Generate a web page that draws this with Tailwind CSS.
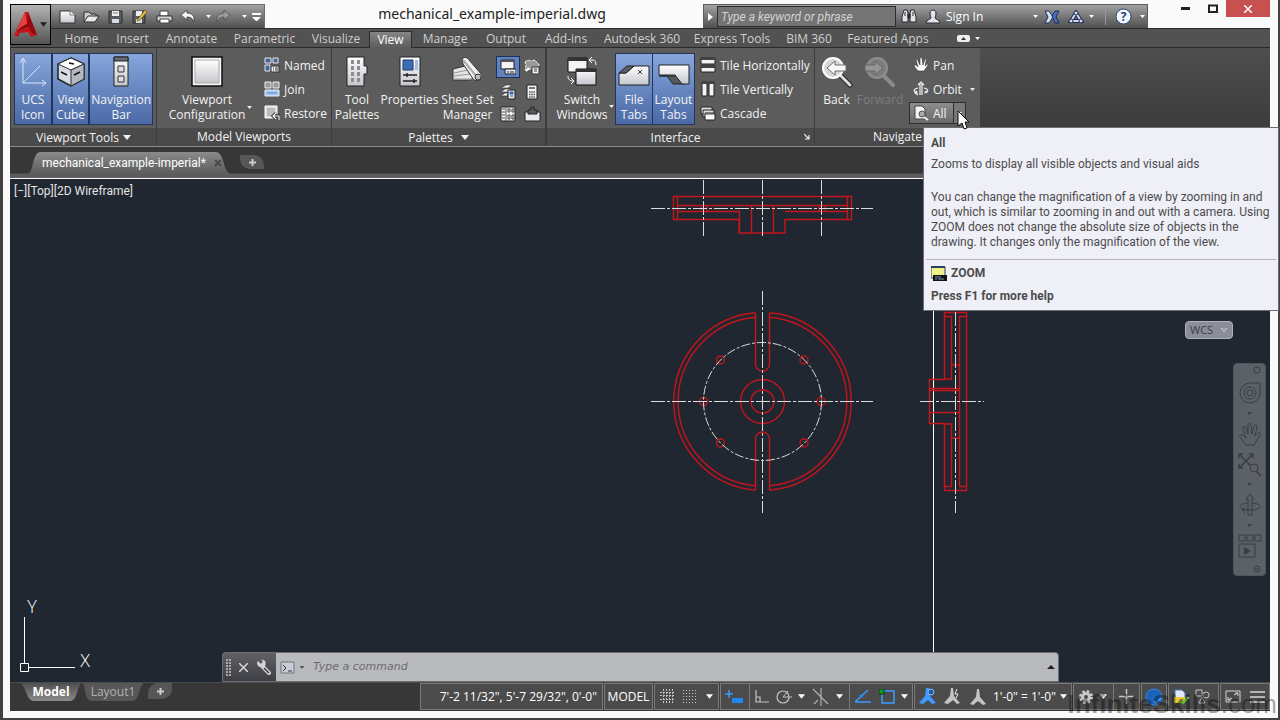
<!DOCTYPE html>
<html lang="en">
<head>
  <meta charset="UTF-8" />
  <meta name="viewport" content="width=device-width, initial-scale=1.0" />
  <title>mechanical_example-imperial.dwg</title>
  <script src="https://cdn.jsdelivr.net/npm/@tailwindcss/browser@4"></script>
</head>
<body class="relative h-screen overflow-hidden bg-[#414141] pl-[3px] pr-[2px] pb-[2px] font-['Open_Sans','Noto_Sans',sans-serif] text-xs text-[#e6e6e6]">

  <!-- Shared icons -->
  <svg class="absolute size-0">
    <defs>
      <symbol id="caret" viewBox="0 0 8 5"><path d="M0 0h8L4 5z" fill="currentColor" /></symbol>
      <linearGradient id="metal" x1="0" y1="0" x2="0" y2="1"><stop offset="0" stop-color="#fff" /><stop offset="1" stop-color="#c4c6cc" /></linearGradient>
      <linearGradient id="tab" x1="0" y1="0" x2="0" y2="1"><stop offset="0" stop-color="#8b8b8b" /><stop offset="1" stop-color="#5c5c5c" /></linearGradient>
      <linearGradient id="tabUp" x1="0" y1="0" x2="0" y2="1"><stop offset="0" stop-color="#4f4f4f" /><stop offset="1" stop-color="#8a8a8a" /></linearGradient>
    </defs>
  </svg>

  <div class="flex h-full flex-col bg-[#fafafa] pl-[7px] pr-2 pb-[7px]">

    <!-- Title bar and ribbon tabs -->
    <header class="grid grid-cols-[41px_1fr] grid-rows-[28px_20px]">
      <div class="row-span-2 mt-1 flex border-b border-[#2a2a2a] bg-[#525252] pb-[2px]">
        <button aria-label="Application menu" class="flex flex-1 items-center justify-center gap-[2px] border border-black bg-linear-to-b from-[#b5b5b5] to-[#555]">
          <svg width="24" height="28" viewBox="0 0 24 28"><path d="M11 1h3l9 23-6 2-3-5-8 1-2 4-4-2z" fill="#c3161c" /><path d="M11 1l2 12-8 6-4 5z" fill="#e8403a" /><path d="M2 22c7-6 13-7 17-6l-3-3c-5 0-9 3-12 6z" fill="#7e0c10" /><path d="M14 1l9 23-5-2-5-9z" fill="#96090e" /></svg>
          <svg class="h-[5px] w-[7px] text-[#222]"><use href="#caret" /></svg>
        </button>
      </div>

      <div class="flex min-w-0">
        <!-- Quick access -->
        <div class="mt-1 flex w-[214px] shrink-0 items-center border-t border-r border-[#6b6b6b] bg-linear-to-b from-[#a2a2a2] to-[#505050] pl-2">
          <button aria-label="New" class="w-6"><svg width="17" height="14" viewBox="0 0 17 14"><path d="M1 1h10l5 4v8H1z" fill="url(#metal)" stroke="#333" /><path d="M11 1v4h5" fill="#fff" stroke="#777" /></svg></button>
          <button aria-label="Open" class="w-[25px]"><svg width="17" height="14" viewBox="0 0 17 14"><path d="M1 12V2h5l2 2h5v3" fill="#c9cbd0" stroke="#2c2c2c" /><path d="M1 12l4-6h11l-4 6z" fill="#e7e8ec" stroke="#2c2c2c" /></svg></button>
          <button aria-label="Save" class="w-6"><svg width="15" height="14" viewBox="0 0 15 14"><path d="M1 1h13v12H1z" fill="#565b66" stroke="#2c2c2c" /><path d="M4 1h7v5H4z" fill="#eceef2" /><path d="M4 9h7v4H4z" fill="#d9dbe0" /><path d="M5 3h5" stroke="#777" /></svg></button>
          <button aria-label="Save as" class="w-6"><svg width="16" height="15" viewBox="0 0 16 15"><path d="M1 2h12v12H1z" fill="#565b66" stroke="#2c2c2c" /><path d="M4 2h6v5H4z" fill="#eceef2" /><path d="M4 10h6v4H4z" fill="#d9dbe0" /><path d="M6 10l7-9 2 2-7 8-3 1z" fill="#f0c24a" stroke="#6b4a10" stroke-width=".7" /></svg></button>
          <button aria-label="Plot" class="w-6"><svg width="17" height="14" viewBox="0 0 17 14"><path d="M4 1h8v5H4z" fill="#fff" stroke="#444" /><path d="M1 6h15v5H1z" fill="#d4d6da" stroke="#333" /><path d="M4 9h9v4H4z" fill="#fff" stroke="#444" /></svg></button>
          <button aria-label="Undo" class="w-5"><svg width="15" height="13" viewBox="0 0 15 13"><path d="M7 0v3c5 0 8 3 7 9-1-3-3-5-7-5v3L1 5z" fill="#f2f3f6" stroke="#3a3a3a" stroke-width=".8" /></svg></button>
          <button aria-label="Undo list" class="flex w-4 justify-center"><svg class="h-[3px] w-[5px] text-white"><use href="#caret" /></svg></button>
          <button aria-label="Redo" class="w-5"><svg width="15" height="13" viewBox="0 0 15 13"><path d="M8 0v3C3 3 0 6 1 12c1-3 3-5 7-5v3l6-5z" fill="#9a9a9a" stroke="#4c4c4c" stroke-width=".8" /></svg></button>
          <button aria-label="Redo list" class="flex w-4 justify-center"><svg class="h-[3px] w-[5px] text-white"><use href="#caret" /></svg></button>
          <button aria-label="Customize"><svg width="9" height="8" viewBox="0 0 9 8"><path d="M0 0h9v2H0zM0 4h9L5 8H4z" fill="#fff" /></svg></button>
        </div>
        <h1 class="flex-1 truncate pl-4 text-center font-['Noto_Sans','Open_Sans',sans-serif] text-[14px] leading-7 text-[#222]">mechanical_example-imperial.dwg</h1>
        <!-- Search and account -->
        <div class="mt-1 flex w-[445px] shrink-0 items-center border border-b-0 border-[#5c5c5c] bg-linear-to-b from-[#a2a2a2] to-[#505050]">
          <button aria-label="Show search" class="w-[13px] pl-1"><svg width="5" height="8" viewBox="0 0 5 8"><path d="M0 0l5 4-5 4z" fill="#fff" /></svg></button>
          <input type="text" aria-label="Search help" placeholder="Type a keyword or phrase" class="h-[21px] w-[179px] border border-[#2d2d2d] bg-[#747474] px-[3px] text-xs italic font-['Roboto',sans-serif] placeholder:text-[#d2d2d2]" />
          <button aria-label="Search" class="ml-[5px]"><svg width="16" height="15" viewBox="0 0 16 15"><path d="M2 4l1-3h3l1 3v9H1V8zM9 4l1-3h3l1 3 1 4v5H9z" fill="#e2e3e7" stroke="#26292f" /><path d="M7 5h2v4H7zM3 4h2M11 4h2M3 6h2M11 6h2" fill="#26292f" stroke="#26292f" /></svg></button>
          <button class="ml-2 flex w-[108px] items-center gap-[5px] text-white"><svg width="16" height="16" viewBox="0 0 16 16"><path d="M5 4c0-4 6-4 6 0 0 3-1 4-1 5s5 2 5 5H1c0-3 5-4 5-5S5 7 5 4z" fill="#dfe3ec" stroke="#2a2a2a" /></svg>Sign In</button>
          <button aria-label="Account list" class="w-[11px]"><svg class="h-[3px] w-[5px] text-white"><use href="#caret" /></svg></button>
          <button aria-label="Exchange" class="w-6"><svg width="16" height="14" viewBox="0 0 16 14"><path d="M1 1h4l4 6-4 6H1l3-6z" fill="#d6e0f4" stroke="#1d2c58" /><path d="M15 1h-4L8 6l3 7h4l-3-6z" fill="#456fc0" stroke="#1d2c58" /></svg></button>
          <button aria-label="Stay connected" class="w-[21px]"><svg width="16" height="14" viewBox="0 0 16 14"><path d="M8 3l5 8H3z" fill="none" stroke="#1f2b4f" stroke-width="4" /><path d="M8 3l5 8H3z" fill="none" stroke="#cfdaf0" stroke-width="2" /><circle cx="8" cy="3" r="2" fill="#dbe4f6" stroke="#1f2b4f" /><circle cx="3" cy="11" r="2" fill="#dbe4f6" stroke="#1f2b4f" /><circle cx="13" cy="11" r="2" fill="#dbe4f6" stroke="#1f2b4f" /></svg></button>
          <button aria-label="Connect list" class="w-4"><svg class="h-[3px] w-[5px] text-white"><use href="#caret" /></svg></button>
          <button aria-label="Help" class="flex h-4 items-center border-l border-[#999] pl-[9px]"><svg width="17" height="17" viewBox="0 0 17 17"><circle cx="8.500" cy="8.500" r="7.500" fill="#f4f7fd" stroke="#27407c" /><text x="8.500" y="13" font-size="12" font-weight="700" text-anchor="middle" fill="#27407c">?</text></svg></button>
          <button aria-label="Help list" class="ml-2"><svg class="h-[3px] w-[5px] text-white"><use href="#caret" /></svg></button>
        </div>
        <div class="flex h-[17px] w-[122px] shrink-0 justify-end">
          <button aria-label="Minimize" class="flex w-[27px] items-center justify-center"><svg width="9" height="3"><path d="M0 0h9v3H0z" fill="#222" /></svg></button>
          <button aria-label="Restore" class="flex w-[27px] items-center justify-center"><svg width="10" height="9"><path d="M1 1.500h8v6.500H1z" fill="none" stroke="#222" stroke-width="2" /></svg></button>
          <button aria-label="Close" class="flex w-[44px] items-center justify-center bg-[#c75050]"><svg width="8" height="8" viewBox="0 0 8 8"><path d="M0 0l8 8M8 0L0 8" stroke="#fff" stroke-width="1.500" /></svg></button>
        </div>
      </div>

      <nav class="flex items-stretch border-t border-b border-[#2a2a2a] bg-[#525252] pl-1 leading-5 text-[#cfcfcf] whitespace-nowrap">
        <button class="w-[53px]">Home</button>
        <button class="w-[49px]">Insert</button>
        <button class="w-[69px]">Annotate</button>
        <button class="w-[77px]">Parametric</button>
        <button class="w-[66px]">Visualize</button>
        <button class="mt-[2px] -mb-px w-[43px] border border-b-0 border-[#2e2e2e] bg-linear-to-b from-[#858585] to-[#5c5c5c] leading-4 text-white">View</button>
        <button class="w-[66px]">Manage</button>
        <button class="w-[56px]">Output</button>
        <button class="w-[64px]">Add-ins</button>
        <button class="w-[88px]">Autodesk 360</button>
        <button class="w-[92px]">Express Tools</button>
        <button class="w-[62px]">BIM 360</button>
        <button class="w-[96px]">Featured Apps</button>
        <button aria-label="Minimize ribbon" class="ml-[21px] flex items-center gap-[5px]"><svg width="13" height="7" viewBox="0 0 13 7"><rect width="13" height="7" rx="2" fill="#eee" /><path d="M4 5h5L6.500 2z" fill="#333" /></svg><svg class="h-[3px] w-[5px] text-white"><use href="#caret" /></svg></button>
      </nav>
    </header>

    <!-- Ribbon -->
    <div class="flex h-[99px] shrink-0 border-b border-[#8a8a8a] bg-linear-to-b from-[#4e4e4e] to-[#383838] leading-[15px] text-[#f2f2f2]">
      <section class="flex w-[147px] flex-col border-x border-[#3c3c3c] bg-[#5c5c5c]">
        <div class="flex h-20 px-[3px] pt-[5px]">
          <button class="flex h-[72px] w-[38px] flex-col items-center gap-1 border border-[#233659] bg-linear-to-b from-[#86a6dc] to-[#4a69a6] pt-[2px]">
            <svg width="28" height="32" viewBox="0 0 28 32"><path d="M4 3v24h23M4 27L21 10M1 7l3-5 3 5M23 24l4 3-4 3" fill="none" stroke="#dbe6f8" /></svg>
            <span>UCS<br />Icon</span>
          </button>
          <button class="flex h-[72px] w-[38px] flex-col items-center gap-1 border border-[#233659] bg-linear-to-b from-[#86a6dc] to-[#4a69a6] pt-[2px]">
            <svg width="30" height="32" viewBox="0 0 30 32"><path d="M15 2l13 6v15l-13 7-13-7V8z" fill="#d9dbe2" stroke="#222" stroke-width="1.500" /><path d="M15 2l13 6-13 6L2 8z" fill="#fff" stroke="#333" /><path d="M15 14l13-6v15l-13 7z" fill="#b4b7c0" stroke="#333" /><path d="M13 7l5 1M5 16l6 3M18 19l6-3" stroke="#111" stroke-width="1.500" /></svg>
            <span>View<br />Cube</span>
          </button>
          <button class="flex h-[72px] w-[64px] flex-col items-center gap-1 border border-[#233659] bg-linear-to-b from-[#86a6dc] to-[#4a69a6] pt-[2px]">
            <svg width="16" height="32" viewBox="0 0 16 32"><path d="M1 1h14v29H1z" fill="url(#metal)" stroke="#222" /><path d="M1 1h14v4H1z" fill="#666b75" stroke="#222" /><path d="M5 10h6v6H5zM5 20h6v6H5z" fill="#dadde2" stroke="#333" /></svg>
            <span>Navigation<br />Bar</span>
          </button>
        </div>
        <button class="flex h-[18px] items-center justify-center gap-1 bg-[#4a4a4a]">Viewport Tools <svg class="h-[5px] w-2"><use href="#caret" /></svg></button>
      </section>

      <section class="flex w-[175px] flex-col border-r border-[#3c3c3c] bg-[#5c5c5c]">
        <div class="flex h-20 pt-[5px] pl-2">
          <button class="relative flex w-[84px] flex-col items-center gap-1 pt-[3px]">
            <svg width="32" height="32" viewBox="0 0 32 32"><path d="M1 1h30v29H1z" fill="#f4f5f7" stroke="#111" stroke-width="1.500" /><path d="M4 4h24v23H4z" fill="url(#metal)" stroke="#aaa" /></svg>
            <span>Viewport<br />Configuration</span>
            <svg class="absolute -right-[3px] top-[53px] h-[3px] w-[5px]"><use href="#caret" /></svg>
          </button>
          <div class="ml-[15px] flex flex-col">
            <button class="flex h-6 items-center gap-1"><svg width="16" height="16" viewBox="0 0 16 16"><path d="M1 1h6v5H1zM9 1h5v5H9zM1 8h5v6H1z" fill="#46659c" stroke="#e8e8e8" /><path d="M7 9h8v6H7z" fill="#eee" stroke="#333" /><path d="M9 11h1m1 0h3M9 13h1m1 0h3" stroke="#333" /></svg>Named</button>
            <button class="flex h-6 items-center gap-1"><svg width="16" height="16" viewBox="0 0 16 16"><path d="M1 1h6v6H1zM9 1h6v6H9z" fill="#999" stroke="#eee" /><path d="M1 9h14v6H1z" fill="#a8c7f0" stroke="#e8f0fa" /><path d="M3 12h10" stroke="#5a86c4" /></svg>Join</button>
            <button class="flex h-6 items-center gap-1"><svg width="16" height="16" viewBox="0 0 16 16"><path d="M1 1h12v12H1z" fill="#ddd" stroke="#fff" /><path d="M3 3h8v8H3z" fill="#bbb" /><path d="M15 15v-4H9m3-3l-3 3 3 3" fill="none" stroke="#222" stroke-width="3" /><path d="M15 15v-4H9m3-3l-3 3 3 3" fill="none" stroke="#fff" stroke-width="1.200" /></svg>Restore</button>
          </div>
        </div>
        <h2 class="h-[18px] bg-[#4a4a4a] text-center leading-[18px]">Model Viewports</h2>
      </section>

      <section class="flex w-[214px] flex-col border-r border-[#3c3c3c] bg-[#5c5c5c]">
        <div class="flex h-20 pt-[5px] pl-[2px]">
          <button class="flex w-[46px] flex-col items-center gap-1 pt-[3px]">
            <svg width="22" height="32" viewBox="0 0 22 32"><path d="M1 1h17v9h3v8h-3v12H1z" fill="url(#metal)" stroke="#222" /><path d="M5 4h3v4H5zM11 4h3v4h-3zM5 10h3v4H5zM11 10h3v4h-3zM5 16h3v4H5zM11 16h3v4h-3zM5 22h3v4H5zM11 22h3v4h-3z" fill="#8b8d93" /></svg>
            <span>Tool<br />Palettes</span>
          </button>
          <button class="flex w-[59px] flex-col items-center gap-1 pt-[3px]">
            <svg width="22" height="32" viewBox="0 0 22 32"><path d="M1 1h20v29H1z" fill="url(#metal)" stroke="#222" /><path d="M4 4h10v10H4z" fill="#3a6db3" stroke="#1f3d6b" /><path d="M16 4h3v10h-3z" fill="#a5bfe2" /><path d="M4 19h14M8 17v4M4 25h14M15 23v4" stroke="#222" stroke-width="1.500" /></svg>
            <span>Properties</span>
          </button>
          <button class="flex w-[57px] flex-col items-center gap-1 pt-[3px] whitespace-nowrap">
            <svg width="32" height="32" viewBox="0 0 32 32"><path d="M1 13l12-3 9 12-4 2H1z" fill="#e4e6ea" stroke="#333" /><path d="M2 17l14-3M2 20l16-2M1 23h20" stroke="#999" /><path d="M10 3c3-3 6-1 7 1l13 15c1 4-4 7-8 5L11 8z" fill="#f1f2f4" stroke="#333" /><path d="M11 4l14 17" stroke="#aaa" stroke-width="2" /><circle cx="26" cy="21" r="3" fill="#bbb" stroke="#333" /></svg>
            <span>Sheet Set<br />Manager</span>
          </button>
          <div class="grid h-[72px] grid-cols-[24px_24px] place-items-center">
            <button aria-label="Command line" class="flex h-[22px] w-6 items-center justify-center border border-[#1d3257] bg-[#5f83c2]"><svg width="16" height="16" viewBox="0 0 16 16"><path d="M1 1h13v9H1z" fill="#f4f4f4" stroke="#222" /><path d="M1 1h13v2H1z" fill="#555" /><path d="M5 10h11v5H5z" fill="#dfe2e8" stroke="#222" /><path d="M7 13h2m1 0h4" stroke="#333" /></svg></button>
            <button aria-label="Markup set manager"><svg width="16" height="16" viewBox="0 0 16 16"><path d="M1 3l3-2 3 1 4-1 2 3 2 1-1 4-13 2 1-4z" fill="#999" stroke="#eee" stroke-dasharray="3 1" /><path d="M2 12l3-3" stroke="#fff" stroke-width="2" /><path d="M8 8h7v7H8z" fill="#eee" stroke="#333" /><path d="M10 10h3M10 12h3" stroke="#444" /></svg></button>
            <button aria-label="Layer properties"><svg width="16" height="16" viewBox="0 0 16 16"><path d="M1 4l5-3h6l-4 3zM1 8l4-3h6L8 8zM1 12l4-3h4l-2 3z" fill="#f2f2f2" stroke="#333" stroke-width=".6" /><path d="M8 6h7v9H8z" fill="#dfe2e8" stroke="#222" /><path d="M10 8h3v2h-3zM10 12h3" fill="#3a6db3" stroke="#3a6db3" /></svg></button>
            <button aria-label="Calculator"><svg width="12" height="16" viewBox="0 0 12 16"><path d="M1 1h10v14H1z" fill="#f2f2f2" stroke="#222" /><path d="M3 3h6v2H3z" fill="#777" /><path d="M3 8h6M3 10.500h6M3 13h6" stroke="#555" stroke-width="1.500" stroke-dasharray="1.500 .7" /></svg></button>
            <button aria-label="Design center"><svg width="16" height="16" viewBox="0 0 16 16"><path d="M1 1h14v14H1z" fill="#f2f2f2" stroke="#222" /><path d="M2 3h3M2 6h3M2 9h3M2 12h3M6 1v14" stroke="#555" /><path d="M8 3h2v3H8zM12 3h2v3h-2zM8 9h2v4H8zM12 9h2v4h-2z" fill="none" stroke="#444" /></svg></button>
            <button aria-label="Clipboard"><svg width="17" height="16" viewBox="0 0 17 16"><path d="M1 6h15v9H1z" fill="#e8eaee" stroke="#222" /><path d="M7 1h3v3h3v4H4V4h3z" fill="#555962" stroke="#222" /></svg></button>
          </div>
        </div>
        <button class="flex h-[18px] items-center justify-center gap-2 bg-[#4a4a4a]">Palettes <svg class="h-[5px] w-2"><use href="#caret" /></svg></button>
      </section>

      <section class="flex w-[269px] flex-col border-x border-[#3c3c3c] bg-[#5c5c5c]">
        <div class="flex h-20 pt-[5px] pl-[10px]">
          <button class="relative flex w-[50px] flex-col items-center gap-1 pt-[3px]">
            <svg width="32" height="32" viewBox="0 0 32 32"><path d="M2 2h19v14H2z" fill="#f4f4f4" stroke="#111" /><path d="M2 2h19v3H2z" fill="#333" /><path d="M10 13h20v16H10z" fill="url(#metal)" stroke="#111" /><path d="M10 13h20v3H10z" fill="#333" /><path d="M23 4h4c2 0 3 2 3 5M26 1l-3 3 3 3M2 20c0 4 2 5 6 5M5 22l3 3-3 3" fill="none" stroke="#fff" /></svg>
            <span>Switch<br />Windows</span>
            <svg class="absolute -right-[7px] top-[52px] h-[3px] w-[5px]"><use href="#caret" /></svg>
          </button>
          <button class="ml-2 flex h-[72px] w-[38px] flex-col items-center gap-1 border border-[#233659] bg-linear-to-b from-[#86a6dc] to-[#4a69a6] pt-[2px]">
            <svg width="32" height="32" viewBox="0 0 32 32"><path d="M1 17h7l8-7h15v19H1z" fill="url(#metal)" stroke="#222" /><path d="M1 17l8-7h7l-8 7z" fill="#5b5e66" stroke="#222" /><path d="M20 14l4 4m0-4l-4 4" stroke="#333" /></svg>
            <span>File<br />Tabs</span>
          </button>
          <button class="flex h-[72px] w-[42px] flex-col items-center gap-1 border border-l-0 border-[#233659] bg-linear-to-b from-[#86a6dc] to-[#4a69a6] pt-[2px]">
            <svg width="32" height="32" viewBox="0 0 32 32"><path d="M1 20h8l6 8h12l4-8z" fill="#555962" stroke="#222" /><path d="M1 9h30v19h-7l-7-9H1z" fill="url(#metal)" stroke="#222" /></svg>
            <span>Layout<br />Tabs</span>
          </button>
          <div class="ml-[5px] flex flex-col whitespace-nowrap">
            <button class="flex h-6 items-center gap-1"><svg width="16" height="16" viewBox="0 0 16 16"><path d="M1 1h14v6H1zM1 9h14v6H1z" fill="#f2f2f2" stroke="#222" /><path d="M1 1h14v2H1zM1 9h14v2H1z" fill="#444" /></svg>Tile Horizontally</button>
            <button class="flex h-6 items-center gap-1"><svg width="16" height="16" viewBox="0 0 16 16"><path d="M2 1h5v14H2zM9 1h5v14H9z" fill="#f2f2f2" stroke="#222" /><path d="M2 1h5v2H2zM9 1h5v2H9z" fill="#444" /></svg>Tile Vertically</button>
            <button class="flex h-6 items-center gap-1"><svg width="16" height="16" viewBox="0 0 16 16"><path d="M1 2h11v7H1z" fill="#ddd" stroke="#222" /><path d="M3 5h11v7H3z" fill="#ddd" stroke="#222" /><path d="M5 8h10v7H5z" fill="#f6f6f6" stroke="#222" /><path d="M5 9h10" stroke="#444" /></svg>Cascade</button>
          </div>
        </div>
        <div class="flex h-[18px] items-center justify-between bg-[#4a4a4a] pr-1">
          <h2 class="flex-1 text-center">Interface</h2>
          <button aria-label="Interface options"><svg width="6" height="6" viewBox="0 0 6 6"><path d="M0 0l5 5M5 1v4H1" fill="none" stroke="#eee" stroke-width="1.200" /></svg></button>
        </div>
      </section>

      <section class="flex w-[165px] flex-col bg-[#5c5c5c]">
        <div class="flex h-20 pt-[5px]">
          <button class="flex w-[43px] flex-col items-center gap-1 pt-[3px]">
            <svg width="32" height="32" viewBox="0 0 32 32"><path d="M20 20l9 9" stroke="#222" stroke-width="5" stroke-linecap="round" /><path d="M20 20l9 9" stroke="#ddd" stroke-width="3" stroke-linecap="round" /><circle cx="12" cy="12" r="10" fill="#d4d6da" stroke="#fff" stroke-width="2" /><path d="M6 12l8-7v4h11v6H14v4z" fill="#f7f7f7" stroke="#6a6d74" /></svg>
            <span>Back</span>
          </button>
          <button class="flex w-[44px] flex-col items-center gap-1 pt-[3px] text-[#7d7d7d]">
            <svg width="32" height="32" viewBox="0 0 32 32"><path d="M20 20l9 9" stroke="#8a8a8a" stroke-width="4" stroke-linecap="round" /><circle cx="13" cy="12" r="10" fill="#7c7c7c" stroke="#8d8d8d" stroke-width="2" /><path d="M19 12l-8-7v4H1v6h10v4z" fill="#959595" stroke="#666" /></svg>
            <span>Forward</span>
          </button>
          <div class="ml-[7px] flex flex-col items-start">
            <button class="flex h-6 items-center gap-1 pl-1"><svg width="16" height="16" viewBox="0 0 16 16"><path d="M5 14L1 9c0-1 1-1 2-1l2 2L3 3c1-1 2 0 2 1l2 4V1c1-1 2 0 2 0l1 7 2-6c1 0 2 0 1 2l-1 5 2-2c1 0 1 1 1 1l-4 6z" fill="#fff" stroke="#333" stroke-width=".6" /></svg>Pan</button>
            <button class="flex h-6 items-center gap-1 pl-1"><svg width="16" height="16" viewBox="0 0 16 16"><path d="M7 2v12M9 2v12M5 4l3-3 3 3M5 7C0 8 0 11 5 12M11 7c5 1 5 4 0 5M4 10l-2 2 3 2M12 10l2 2" fill="none" stroke="#f4f4f4" stroke-width="1.200" /></svg>Orbit<svg class="ml-1 h-[3px] w-[5px]"><use href="#caret" /></svg></button>
            <div class="mt-px flex h-[22px] border border-[#2f2f2f]">
              <button class="flex w-[43px] items-center gap-1 bg-linear-to-b from-[#8d8d8d] to-[#6a6a6a] pl-[3px]"><svg width="16" height="16" viewBox="0 0 16 16"><path d="M2 1h7l3 3v10H2z" fill="#f4f4f4" stroke="#444" /><path d="M11 12l4 3" stroke="#eee" stroke-width="2" /><circle cx="9" cy="9" r="3" fill="#aaa" stroke="#555" /></svg>All</button>
              <button aria-label="Zoom list" class="flex w-3 items-center justify-center border-l border-[#2f2f2f] bg-[#777]"><svg class="h-[3px] w-[5px]"><use href="#caret" /></svg></button>
            </div>
          </div>
        </div>
        <h2 class="h-[18px] bg-[#4a4a4a] text-center leading-[18px]">Navigate</h2>
      </section>
    </div>

    <!-- Drawing tabs -->
    <div class="flex h-8 shrink-0 items-start border-b border-white bg-linear-to-b from-[#373737] from-85% to-[#5c5c5c] to-86% pl-[18px]">
      <div class="relative isolate mt-1 flex h-[23px] w-[210px] items-center pl-[14px] font-['Roboto',sans-serif] whitespace-nowrap text-white">
        <svg class="absolute inset-0 -z-10 size-full" viewBox="0 0 212 23" preserveAspectRatio="none"><path d="M0 23C6 21 4 1 13 1h176c10 0 7 20 16 22z" fill="url(#tab)" /></svg>
        <button>mechanical_example-imperial*</button>
        <button aria-label="Close drawing" class="ml-auto mr-4"><svg width="8" height="8" viewBox="0 0 8 8"><path d="M1 1l6 6M7 1L1 7" stroke="#4a4a4a" stroke-width="2" /></svg></button>
      </div>
      <button aria-label="New drawing" class="mt-2 ml-[2px] flex h-[14px] w-6 items-center justify-center rounded-tr-[10px] rounded-bl-[10px] bg-[#575757]"><svg width="7" height="7" viewBox="0 0 7 7"><path d="M3.500 0v7M0 3.500h7" stroke="#ccc" stroke-width="2" /></svg></button>
    </div>

    <!-- Canvas -->
    <main class="relative min-h-0 flex-1 overflow-hidden bg-[#212730]">
      <svg class="absolute inset-0 size-full">
        <g transform="translate(-10 -179)" fill="none">
          <path d="M933.500 179v504" stroke="#fff" />
          <g stroke="#c4141c" stroke-width="1.400">
            <!-- top view -->
            <path d="M673.500 196.500h178v23H785v13.500h-46v-13.500h-65.500zM677.500 197v22M847.500 197v22M678 205.500h169M678 211.500h61.500v22M847 211.500H785M751.500 205v28M773.500 205v28M701 205v6M707 205v6M819 205v6M825 205v6" />
            <!-- front view -->
            <path d="M755.500 312.800A89 89 0 0 0 755.500 490.200M769.500 312.800A89 89 0 0 1 769.500 490.200M755.500 317.300A84.500 84.500 0 0 0 755.500 485.700M769.500 317.300A84.500 84.500 0 0 1 769.500 485.700" />
            <path d="M755.500 313v51a7 7 0 0 0 14 0v-51M755.500 490v-51a7 7 0 0 1 14 0v51" />
            <circle cx="762.500" cy="401.500" r="22" />
            <circle cx="762.500" cy="401.500" r="11.500" />
            <circle cx="821" cy="401.500" r="4" />
            <circle cx="703.500" cy="401.500" r="4" />
            <circle cx="720.500" cy="360" r="4" />
            <circle cx="804" cy="360" r="4" />
            <circle cx="720.500" cy="443" r="4" />
            <circle cx="804" cy="443" r="4" />
            <!-- side view -->
            <path d="M944.500 312.500h22v178h-22V423.500h-15v-44h15zM944.500 316.500h7M959 316.500h8M944.500 486.500h7M959 486.500h8M951.500 316v63h-7M951.500 487v-63h-7M959.500 316v171M929.500 388.500h30M929.500 390.500h30M929.500 412.500h30M951.500 365h8M951.500 438h8" />
          </g>
          <g stroke="#dcdcdc" stroke-dasharray="14 2 3 2">
            <path d="M651 208.500h222M703.500 180v56M762.500 180v56M821.500 180v56M651 401.500h222M762.500 291v222M920 401.500h64M955.500 312v201" />
            <circle cx="762.500" cy="401.500" r="59" stroke-dasharray="9 2 3 2" />
          </g>
          <!-- UCS -->
          <path d="M24.500 617v46M29 667.500h46M20.500 663.500h8v8h-8z" stroke="#fff" />
          <g fill="#fff" font-size="18" font-weight="300" text-anchor="middle"><text x="32" y="613">Y</text><text x="85" y="667">X</text></g>
        </g>
      </svg>
      <p class="absolute top-1 left-1 font-['Roboto',sans-serif] leading-4 text-[#e4e4e4]">[−][Top][2D Wireframe]</p>

      <button class="absolute top-[142px] right-[37px] flex h-[18px] w-12 items-center justify-between rounded border border-[#b0b3ba] bg-[#8b8e98] px-1 text-[11px] text-[#3b3e47]">WCS <svg width="8" height="5" viewBox="0 0 8 5"><path d="M1 0h6L4 4z" fill="none" stroke="#c5c8d0" /></svg></button>

      <div class="absolute top-[184px] right-1 flex h-[213px] w-[33px] flex-col items-center justify-between rounded border border-[#50545c] bg-[#5c6067] py-[2px] text-[#393d44]">
        <button aria-label="Close bar" class="mr-1 self-end"><svg width="8" height="8" viewBox="0 0 8 8"><circle cx="4" cy="4" r="3" fill="none" stroke="currentColor" /></svg></button>
        <button aria-label="Steering wheel"><svg width="24" height="24" viewBox="0 0 24 24"><path d="M22 2v11a10 10 0 1 1-10-11z" fill="none" stroke="currentColor" /><circle cx="12" cy="12" r="6" fill="none" stroke="currentColor" /><circle cx="12" cy="12" r="3" fill="none" stroke="currentColor" /></svg></button>
        <svg class="h-[3px] w-[5px]"><use href="#caret" /></svg>
        <button aria-label="Pan view"><svg width="24" height="24" viewBox="0 0 24 24"><path d="M8 23L2 15c-1-2 1-3 3-2l3 3L5 6c0-2 2-2 3-1l2 7V3c0-2 3-2 3 0l1 9 2-8c1-2 3-1 3 1l-2 9 3-3c2-1 3 0 2 2l-6 10z" fill="none" stroke="currentColor" /></svg></button>
        <button aria-label="Zoom extents"><svg width="24" height="24" viewBox="0 0 24 24"><path d="M1 1l14 14M15 1L1 15M1 5V1h4M11 1h4v4M1 11v4h4M18 18l5 5" fill="none" stroke="currentColor" stroke-width="1.500" /><circle cx="16" cy="15" r="4" fill="#5c6067" stroke="currentColor" /></svg></button>
        <svg class="h-[3px] w-[5px]"><use href="#caret" /></svg>
        <button aria-label="Orbit view"><svg width="24" height="24" viewBox="0 0 24 24"><path d="M10 22V6H8l4-5 4 5h-2v16zM10 10c-11 1-11 6 0 7M14 10c11 1 11 6 0 7M14 17H4M7 14l-3 3 3 3" fill="none" stroke="currentColor" /></svg></button>
        <svg class="h-[3px] w-[5px]"><use href="#caret" /></svg>
        <button aria-label="Show motion"><svg width="24" height="24" viewBox="0 0 24 24"><path d="M1 1h6v6H1zM9 1h6v6H9zM17 1h6v6h-6zM1 10h16v13H1z" fill="none" stroke="currentColor" /><path d="M6 13l7 4-7 4z" fill="currentColor" /></svg></button>
        <button aria-label="Bar options" class="mr-1 self-end"><svg width="8" height="8" viewBox="0 0 8 8"><circle cx="4" cy="4" r="3" fill="none" stroke="currentColor" /><path d="M2 4h4" stroke="currentColor" /></svg></button>
      </div>

      <!-- Command line -->
      <div class="absolute bottom-0 left-[212px] right-[211px] flex h-[30px] overflow-hidden rounded-t border border-[#6a6d73] bg-[#b9babe]">
        <div class="flex w-[53px] items-center gap-2 bg-linear-to-b from-[#5f6167] to-[#3d3f45] pl-[3px]">
          <svg width="5" height="17" viewBox="0 0 5 17"><path d="M1 0v17M4 0v17" stroke="#aaa" stroke-width="2" stroke-dasharray="2 1" /></svg>
          <button aria-label="Close command line"><svg width="9" height="9" viewBox="0 0 9 9"><path d="M0 0l9 9M9 0L0 9" stroke="#d5d5d5" stroke-width="1.500" /></svg></button>
          <button aria-label="Customize command line"><svg width="16" height="16" viewBox="0 0 16 16"><path d="M7 8l6 6" stroke="#d5d5d5" stroke-width="4" stroke-linecap="round" /><path d="M8 9l5 5" stroke="#3b3d43" stroke-width="1.500" /><path d="M2 2l3 3 2-3-2-1c3-1 6 2 4 6-4 3-8 0-8-3z" fill="#d5d5d5" /></svg></button>
        </div>
        <button aria-label="Recent commands" class="flex items-center gap-1 pl-1"><svg width="15" height="13" viewBox="0 0 15 13"><path d="M1 1h13v11H1z" fill="#c9ccd4" stroke="#6c7280" /><path d="M3 4l3 3-3 3M8 10h4" fill="none" stroke="#30343d" /></svg><svg class="h-[3px] w-[6px] text-[#555]"><use href="#caret" /></svg></button>
        <input type="text" aria-label="Command" placeholder="Type a command" class="min-w-0 flex-1 px-2 font-['DejaVu_Sans','Noto_Sans',sans-serif] text-[11px] italic text-[#333] placeholder:text-[#6c6c70]" />
        <button aria-label="Command history" class="pr-[3px]"><svg width="8" height="4" viewBox="0 0 8 4"><path d="M0 4h8L4 0z" fill="#222" /></svg></button>
      </div>
    </main>

    <!-- Layout tabs and status bar -->
    <footer class="flex h-[29px] shrink-0 items-stretch border-t border-[#4b4b4b] bg-[#373737] pb-px leading-4 whitespace-nowrap">
      <div class="flex h-[18px] flex-1 items-stretch pl-[10px]">
        <button class="relative isolate w-[62px] font-bold text-white"><svg class="absolute inset-0 -z-10 size-full" viewBox="0 0 62 18" preserveAspectRatio="none"><path d="M0 0h62c-5 2-4 18-12 18H14C6 18 6 2 0 0z" fill="url(#tabUp)" /></svg>Model</button>
        <button class="relative isolate w-[62px] text-[#b2b2b2]"><svg class="absolute inset-0 -z-10 size-full" viewBox="0 0 62 18" preserveAspectRatio="none"><path d="M0 0h62c-5 2-4 18-12 18H10C2 18 4 2 0 0z" fill="#575757" /></svg>Layout1</button>
        <button aria-label="New layout" class="ml-1 flex h-4 w-6 items-center justify-center rounded-tl-[10px] rounded-br-[10px] bg-[#575757]"><svg width="7" height="7" viewBox="0 0 7 7"><path d="M3.500 0v7M0 3.500h7" stroke="#ccc" stroke-width="2" /></svg></button>
      </div>
      <div class="flex items-stretch gap-px bg-[#3f3f3f] text-white">
        <button class="w-[183px] border border-[#7a7a7a] bg-[#4b4b4b] pr-[5px] text-right text-xs">7'-2 11/32", 5'-7 29/32", 0'-0"</button>
        <button class="w-[49px] border border-[#7a7a7a] bg-[#4b4b4b] text-xs">MODEL</button>
        <div class="flex w-[65px] items-center justify-between border border-[#7a7a7a] bg-[#4b4b4b] px-[5px]">
          <button aria-label="Grid"><svg width="15" height="15" viewBox="0 0 15 15"><path d="M3.500 0v15M6.500 0v15M9.500 0v15M12.500 0v15M0 3.500h15M0 6.500h15M0 10.500h15" stroke="#c4c4c4" stroke-dasharray="2 1" /></svg></button>
          <button aria-label="Snap"><svg width="15" height="15" viewBox="0 0 15 15"><path d="M0 1.500h15M0 4.500h15M0 7.500h15M0 10.500h15M0 13.500h15" stroke="#c4c4c4" stroke-dasharray="1 2" /></svg></button>
          <button aria-label="Snap list"><svg class="h-[5px] w-[7px]"><use href="#caret" /></svg></button>
        </div>
        <div class="flex w-[193px] items-center justify-between border border-[#7a7a7a] bg-[#4b4b4b] px-[4px]">
          <button aria-label="Dynamic input"><svg width="18" height="14" viewBox="0 0 18 14"><path d="M4 0v8M0 4h8" stroke="#3d9bff" stroke-width="1.500" /><path d="M7 8h11v5H7z" fill="#1f86f2" /></svg></button>
          <button aria-label="Ortho" class="flex h-full items-center border-l border-[#7a7a7a] pl-1"><svg width="15" height="15" viewBox="0 0 15 15"><path d="M2 1v12h13M2 8h4v5" fill="none" stroke="#c4c4c4" stroke-width="1.200" /></svg></button>
          <button aria-label="Polar tracking"><svg width="16" height="14" viewBox="0 0 16 14"><circle cx="7" cy="7" r="6" fill="none" stroke="#c4c4c4" stroke-width="1.200" /><path d="M7 7h9M7 7l5-6" stroke="#c4c4c4" /></svg></button>
          <button aria-label="Polar list"><svg class="h-[5px] w-[7px]"><use href="#caret" /></svg></button>
          <button aria-label="Isometric drafting"><svg width="18" height="18" viewBox="0 0 18 18"><path d="M9 0v18M1 1l15 15M6 12l-4 4" stroke="#b0b0b0" stroke-width="1.200" /></svg></button>
          <button aria-label="Isometric list"><svg class="h-[5px] w-[7px]"><use href="#caret" /></svg></button>
          <button aria-label="Object snap tracking" class="flex h-full items-center border-l border-[#7a7a7a] pl-1"><svg width="18" height="15" viewBox="0 0 18 15"><path d="M1 13h16M1 13L14 1" stroke="#3d9bff" stroke-width="1.500" /><path d="M5 7l5 2-3-4z" fill="#1f86f2" /></svg></button>
          <button aria-label="Object snap"><svg width="16" height="15" viewBox="0 0 16 15"><path d="M3 2h12v12H3z" fill="none" stroke="#3d9bff" stroke-width="1.500" /><path d="M0 0h5v5H0z" fill="#159a26" stroke="#053a0b" /></svg></button>
          <button aria-label="Object snap list"><svg class="h-[5px] w-[7px]"><use href="#caret" /></svg></button>
        </div>
        <div class="flex w-[158px] items-center justify-between border border-[#7a7a7a] bg-[#4b4b4b] px-[4px]">
          <button aria-label="Annotation visibility"><svg width="18" height="17" viewBox="0 0 18 17"><path d="M7 0h3l1 8 6 7-4 1-4-4-5 4-4-1 6-7z" fill="#3d9bff" /><circle cx="12" cy="4" r="3" fill="#245da6" stroke="#7dbcff" /></svg></button>
          <button aria-label="Auto scale"><svg width="18" height="17" viewBox="0 0 18 17"><path d="M7 0h2l1 8 6 7-3 1-4-4-5 4-4-1 6-7z" fill="#c4c4c4" /><path d="M13 1l-2 5h3l-2 4" fill="none" stroke="#eee" /></svg></button>
          <button aria-label="Annotation scale"><svg width="16" height="16" viewBox="0 0 16 16"><path d="M7 0h2l1 8 6 7-3 1-5-4-5 4-3-1 6-7z" fill="#c4c4c4" /></svg></button>
          <button class="flex items-center gap-1 text-xs">1'-0" = 1'-0" <svg class="h-[5px] w-[7px]"><use href="#caret" /></svg></button>
        </div>
        <div class="flex w-[67px] items-center justify-between border border-[#7a7a7a] bg-[#4b4b4b] px-[5px]">
          <button aria-label="Workspace"><svg width="14" height="14" viewBox="0 0 14 14"><circle cx="7" cy="7" r="5.500" fill="none" stroke="#c9c9c9" stroke-width="3" stroke-dasharray="2.500 1.820" /><circle cx="7" cy="7" r="3.500" fill="none" stroke="#c9c9c9" stroke-width="3" /></svg></button>
          <button aria-label="Workspace list"><svg class="h-[5px] w-[7px]"><use href="#caret" /></svg></button>
          <button aria-label="Annotation monitor" class="flex h-full items-center border-l border-[#7a7a7a] pl-[5px]"><svg width="15" height="15" viewBox="0 0 15 15"><path d="M7.500 0v15M0 7.500h15" stroke="#c4c4c4" stroke-width="1.500" /></svg></button>
        </div>
        <button aria-label="Hardware acceleration" class="flex w-[26px] items-center justify-center border border-[#7a7a7a] bg-[#4b4b4b]"><svg width="18" height="18" viewBox="0 0 18 18"><circle cx="9" cy="9" r="8" fill="#1c62b8" stroke="#2d85e8" /><path d="M9 13l2 2 5-5" fill="none" stroke="#4da3ff" stroke-width="1.500" /></svg></button>
        <div class="flex w-[51px] items-center justify-between border border-[#7a7a7a] bg-[#4b4b4b] pr-[8px] pl-[4px]">
          <button aria-label="Drawing status"><svg width="17" height="16" viewBox="0 0 17 16"><path d="M2 1h7l3 3v6H2z" fill="#dfe8f5" stroke="#4976b5" /><path d="M1 8h11v6H1z" fill="#e8c93d" /><path d="M7 11l3 3 6-6" fill="none" stroke="#59b52c" stroke-width="2" /></svg></button>
          <button aria-label="Isolate objects"><svg width="15" height="15" viewBox="0 0 15 15"><path d="M1 1h6v6H1zM4 14l3-6 3 6z" fill="none" stroke="#c4c4c4" /><circle cx="11" cy="6" r="3" fill="none" stroke="#c4c4c4" /></svg></button>
        </div>
        <div class="flex w-[50px] items-center justify-between border border-[#7a7a7a] bg-[#4b4b4b] px-[4px]">
          <button aria-label="Clean screen"><svg width="16" height="13" viewBox="0 0 16 13"><path d="M1 1h14v11H1z" fill="none" stroke="#d6d6d6" /><path d="M9 5l4-2M10 3h3v3M7 8l-4 2M3 7v3h3" fill="none" stroke="#d6d6d6" /></svg></button>
          <button aria-label="Customization"><svg width="15" height="12" viewBox="0 0 15 12"><path d="M0 1h15M0 6h15M0 11h15" stroke="#d6d6d6" stroke-width="1.500" /></svg></button>
        </div>
      </div>
    </footer>
  </div>

  <!-- Tooltip -->
  <div role="tooltip" class="absolute top-[127px] right-px w-[356px] border border-[#6e6e72] bg-[#efeff7] px-[7px] pt-2 pb-[6px] font-['Roboto',sans-serif] leading-[15px] text-[#4c4c4c]">
    <p class="font-bold">All</p>
    <p class="mt-[6px]">Zooms to display all visible objects and visual aids</p>
    <p class="mt-[18px] whitespace-nowrap">You can change the magnification of a view by zooming in and<br />out, which is similar to zooming in and out with a camera. Using<br />ZOOM does not change the absolute size of objects in the<br />drawing. It changes only the magnification of the view.</p>
    <hr class="-mx-[5px] mt-[9px] border-[#b4b4ba]" />
    <p class="mt-[6px] flex items-center gap-1 font-bold"><svg width="16" height="15" viewBox="0 0 16 15"><path d="M0 1h14v11H0z" fill="#eef08a" stroke="#2d3d66" /><path d="M0 1h14" stroke="#2d3d66" stroke-width="2" /><path d="M2 9h14v6H2z" fill="#111" /><path d="M4 11h6M4 13h2m1 0h6" stroke="#8796c4" /></svg>ZOOM</p>
    <p class="mt-2 font-bold">Press F1 for more help</p>
  </div>

  <!-- Pointer -->
  <svg class="absolute top-[110px] left-[957px]" width="13" height="20" viewBox="0 0 13 20"><path d="M1 1v15l4-3 2 6 3-1-2-6h4z" fill="#fff" stroke="#111" /></svg>

  <p class="pointer-events-none absolute right-[3px] bottom-0 font-['Liberation_Sans',sans-serif] text-[26px] leading-8 text-black/35"><b>InfiniteSkills</b>.com</p>
</body>
</html>
